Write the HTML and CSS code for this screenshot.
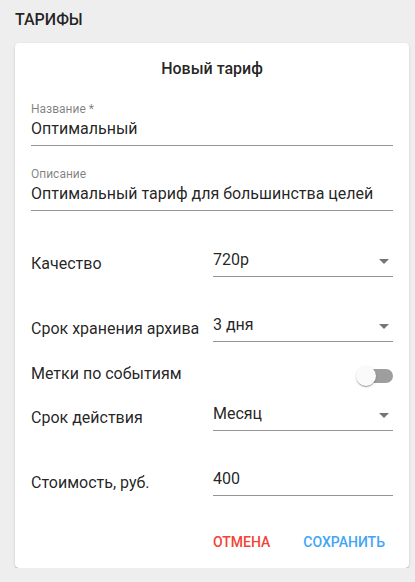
FILE: index.html
```html
<!DOCTYPE html>
<html lang="ru">
<head>
<meta charset="utf-8">
<title>Тарифы</title>
<link rel="stylesheet" href="styles.css">
</head>
<body>
<div class="page">
  <h1 class="page-title">ТАРИФЫ</h1>
  <div class="card">
    <h2 class="card-title">Новый тариф</h2>

    <div class="field field-name">
      <div class="field-label">Название *</div>
      <div class="input">Оптимальный</div>
    </div>

    <div class="field field-desc">
      <div class="field-label">Описание</div>
      <div class="input">Оптимальный тариф для большинства целей</div>
    </div>

    <div class="row row-quality">
      <div class="row-label">Качество</div>
      <div class="input select">
        <span class="value">720p</span>
        <svg class="arrow" width="10" height="5" viewBox="0 0 10 5"><path d="M0 0l5 5 5-5z"/></svg>
      </div>
    </div>

    <div class="row row-archive">
      <div class="row-label">Срок хранения архива</div>
      <div class="input select">
        <span class="value">3 дня</span>
        <svg class="arrow" width="10" height="5" viewBox="0 0 10 5"><path d="M0 0l5 5 5-5z"/></svg>
      </div>
    </div>

    <div class="toggle-row">
      <div class="toggle-label">Метки по событиям</div>
      <div class="switch">
        <span class="switch-track"></span>
        <span class="switch-thumb"></span>
      </div>
    </div>

    <div class="row row-period">
      <div class="row-label">Срок действия</div>
      <div class="input select">
        <span class="value">Месяц</span>
        <svg class="arrow" width="10" height="5" viewBox="0 0 10 5"><path d="M0 0l5 5 5-5z"/></svg>
      </div>
    </div>

    <div class="row row-price">
      <div class="row-label">Стоимость, руб.</div>
      <div class="input">400</div>
    </div>

    <div class="actions">
      <button class="btn btn-cancel">Отмена</button>
      <button class="btn btn-save">Сохранить</button>
    </div>
  </div>
</div>
</body>
</html>
```
FILE: styles.css
```css
* {
  box-sizing: border-box;
}

html, body {
  margin: 0;
  padding: 0;
  background: #eeeeee;
}

body {
  font-family: Roboto, "Liberation Sans", Arial, sans-serif;
  color: rgba(0, 0, 0, 0.87);
  font-size: 16px;
}

.page {
  padding: 8px 6px 0 15px;
}

.page-title {
  margin: 0 0 11px;
  font-size: 16px;
  font-weight: 500;
  line-height: 24px;
  color: rgba(0, 0, 0, 0.87);
}

.card {
  background: #ffffff;
  border-radius: 4px;
  box-shadow: 0 2px 1px -1px rgba(0, 0, 0, 0.2), 0 1px 1px 0 rgba(0, 0, 0, 0.14), 0 1px 3px 0 rgba(0, 0, 0, 0.12);
  padding: 14px 16px 8px;
}

.card-title {
  margin: 0;
  text-align: center;
  font-size: 16px;
  font-weight: 500;
  line-height: 24px;
}

.field {
  display: flex;
  flex-direction: column;
}

.field-name {
  margin-top: 21px;
}

.field-desc {
  margin-top: 21px;
}

.field-label {
  font-size: 12px;
  line-height: 14px;
  color: rgba(0, 0, 0, 0.5);
  margin-bottom: 3px;
}

.input {
  font-size: 16px;
  line-height: 20px;
  padding-bottom: 6px;
  border-bottom: 1px solid rgba(0, 0, 0, 0.42);
  white-space: nowrap;
}

.select {
  display: flex;
  align-items: flex-start;
}

.select .value {
  flex: 1;
}

.arrow {
  margin-top: 9px;
  margin-right: 4px;
  fill: rgba(0, 0, 0, 0.54);
}

.row {
  display: grid;
  grid-template-columns: 182px 1fr;
  align-items: end;
}

.row-label {
  line-height: 20px;
  padding-bottom: 3px;
  white-space: nowrap;
}

.row-quality {
  margin-top: 39px;
}

.row-archive {
  margin-top: 38px;
}

.toggle-row {
  margin-top: 13px;
  height: 38px;
  display: flex;
  align-items: center;
  justify-content: space-between;
}

.toggle-label {
  line-height: 20px;
}

.switch {
  display: grid;
  width: 37px;
  height: 20px;
  margin-top: 3px;
}

.switch-track {
  grid-area: 1 / 1;
  justify-self: end;
  align-self: center;
  width: 34px;
  height: 14px;
  border-radius: 7px;
  background: #9e9e9e;
}

.switch-thumb {
  grid-area: 1 / 1;
  justify-self: start;
  width: 20px;
  height: 20px;
  border-radius: 50%;
  background: #fafafa;
  box-shadow: 0 2px 1px -1px rgba(0, 0, 0, 0.2), 0 1px 1px 0 rgba(0, 0, 0, 0.14), 0 1px 3px 0 rgba(0, 0, 0, 0.12);
}

.row-period {
  margin-top: 11px;
}

.row-price {
  margin-top: 38px;
}

.actions {
  margin-top: 28px;
  display: flex;
  justify-content: flex-end;
  gap: 17px;
}

.btn {
  border: 0;
  background: transparent;
  font-family: Roboto, "Liberation Sans", Arial, sans-serif;
  font-size: 14px;
  font-weight: 500;
  line-height: 24px;
  padding: 6px 8px;
  text-transform: uppercase;
  letter-spacing: 0;
  cursor: pointer;
}

.btn-cancel {
  color: #f44336;
}

.btn-save {
  color: #42a5f5;
}
```
